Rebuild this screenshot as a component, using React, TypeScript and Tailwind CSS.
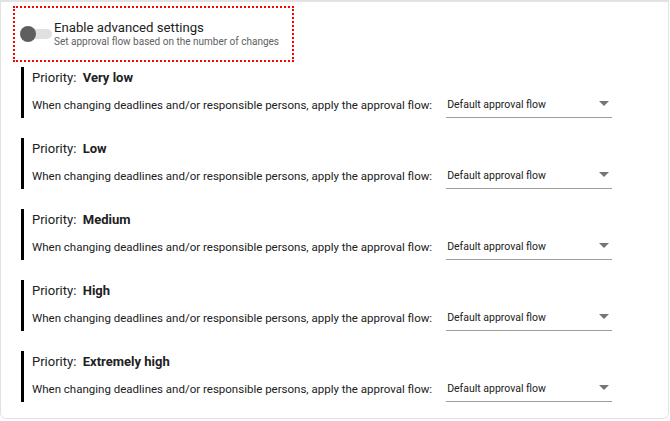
import React from "react";

const items = ["Very low", "Low", "Medium", "High", "Extremely high"];

function Row({ label }: { label: string }) {
  return (
    <div className="ml-[20px] border-l-[3px] border-black pl-[8px] h-[51px] flex flex-col">
      <div className="mt-[2px] text-[13px] leading-[18px] text-[#212121]">
        Priority:&nbsp; <span className="font-bold">{label}</span>
      </div>
      <div className="mt-[5px] flex items-center">
        <span className="text-[11.5px] text-[#212121] leading-[16px]">
          When changing deadlines and/or responsible persons, apply the approval flow:
        </span>
        <div className="ml-[14px] w-[166px] h-[26px] border-b border-[#9e9e9e] flex items-center justify-between pl-[1px] pr-[3px]">
          <span className="text-[10.5px] text-[#212121]">Default approval flow</span>
          <svg width="10" height="6" viewBox="0 0 10 6" className="mb-[1px]">
            <path d="M0 0 L10 0 L5 5 Z" fill="#757575" />
          </svg>
        </div>
      </div>
    </div>
  );
}

export default function App() {
  return (
    <div className="w-[670px] h-[421px] bg-white overflow-hidden" style={{ fontFamily: "Roboto, 'Liberation Sans', sans-serif" }}>
      <div className="w-[669px] h-[419px] border border-t-[2px] border-[#e2e2e2] rounded-b-[6px] pt-[4px]">
        <div className="ml-[12px] w-[281px] h-[56px] border-[2px] border-dotted border-[#ff0000] flex items-center pl-[5px]">
          <div className="relative w-[32px] h-[16px] flex items-center">
            <div className="w-[30px] h-[10px] rounded-full bg-[#e0e0e0] ml-[2px]" />
            <div className="absolute left-0 top-0 w-[16px] h-[16px] rounded-full bg-[#5f5f5f]" />
          </div>
          <div className="ml-[2px] flex flex-col">
            <span className="text-[13.2px] leading-[16px] text-[#212121]">Enable advanced settings</span>
            <span className="text-[10px] leading-[12px] text-[#616161]">Set approval flow based on the number of changes</span>
          </div>
        </div>
        <div className="mt-[5px] flex flex-col gap-[20px]">
          {items.map((l) => (
            <Row key={l} label={l} />
          ))}
        </div>
      </div>
    </div>
  );
}
